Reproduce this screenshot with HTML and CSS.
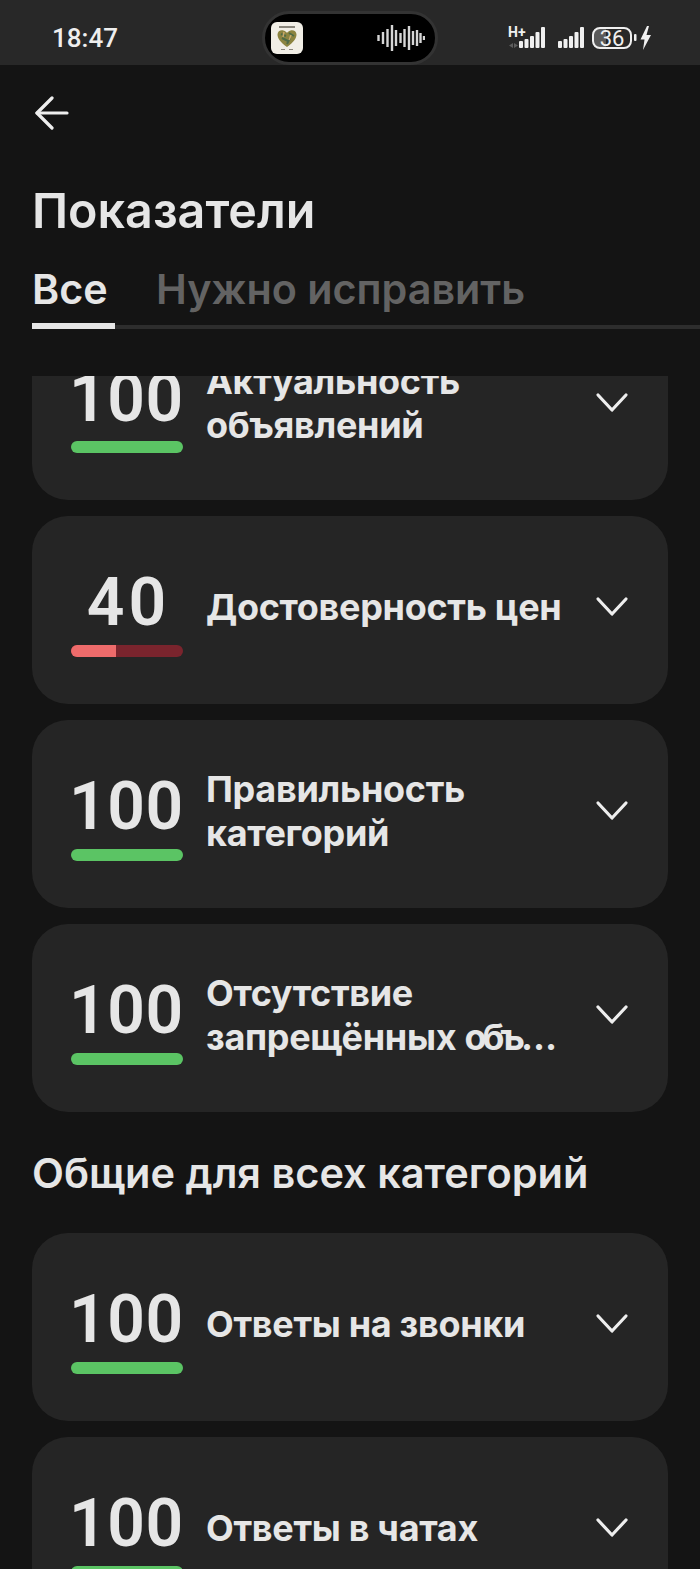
FILE: index.html
```html
<!DOCTYPE html>
<html lang="ru">
  <head>
    <meta charset="UTF-8" />
    <meta name="viewport" content="width=device-width, initial-scale=1.0" />
    <title>Показатели</title>
    <link rel="stylesheet" href="styles.css">
  </head>
  <body>
    <div class="status">
      <div class="time">18:47</div>
      <div class="pill">
        <svg class="app-icon" width="32" height="32" viewBox="0 0 32 32">
          <rect width="32" height="32" rx="6" fill="#f1eee6"/>
          <rect x="8" y="4" width="16" height="2" fill="#8a867c"/>
          <path d="M16 25 C9 20 6.500 16 6.500 12.500 C6.500 9 10 7.500 12.500 8.500 C14.500 9.200 15.500 10 16 11 C16.500 10 17.500 9.200 19.500 8.500 C22 7.500 25.500 9 25.500 12.500 C25.500 16 23 20 16 25 Z" fill="#8c8440"/>
          <path d="M10 12 L15 14 M18 11 L23 14 M11 16 L17 19 M19 16 L16 22" stroke="#4f6b46" stroke-width="2"/>
          <path d="M13 10 L12 15 M20 13 L18 18" stroke="#c9a86a" stroke-width="1.500"/>
          <rect x="10" y="27" width="4" height="1" fill="#8a867c"/>
          <rect x="18" y="27" width="4" height="1" fill="#8a867c"/>
        </svg>
        <svg class="wave" width="48" height="30" viewBox="0 0 48 30">
          <g stroke="#d6d6d6" stroke-width="2.400">
            <path d="M1.500 12 V18"/>
            <path d="M6 9 V21"/>
            <path d="M10.500 6 V24"/>
            <path d="M15 2 V28"/>
            <path d="M19 7 V23"/>
            <path d="M23.500 10 V20"/>
            <path d="M27.500 6 V24"/>
            <path d="M32 3 V27"/>
            <path d="M36 8 V22"/>
            <path d="M40 7 V23"/>
            <path d="M43.500 10 V20"/>
            <path d="M47 13 V17"/>
          </g>
        </svg>
      </div>
      <svg class="sys-icons" width="144" height="26" viewBox="0 0 144 26">
        <text x="0" y="12" class="net-type">H+</text>
        <path d="M5 23 L1 20.500 L5 18 Z M6 18 L10 20.500 L6 23 Z" fill="#5c5c5c"/>
        <g fill="#f0f0f0">
          <rect x="11" y="16" width="4" height="7" rx="1"/>
          <rect x="16.500" y="14" width="4" height="9" rx="1"/>
          <rect x="22" y="11" width="4" height="12" rx="1"/>
          <rect x="27.500" y="7" width="4" height="16" rx="1"/>
          <rect x="33" y="2" width="4" height="21" rx="1"/>
          <rect x="50" y="16" width="4" height="7" rx="1"/>
          <rect x="55.500" y="14" width="4" height="9" rx="1"/>
          <rect x="61" y="11" width="4" height="12" rx="1"/>
          <rect x="66.500" y="7" width="4" height="16" rx="1"/>
          <rect x="72" y="2" width="4" height="21" rx="1"/>
        </g>
        <path d="M88 4 H98 V22 H88 Q86 22 86 20 V6 Q86 4 88 4 Z" fill="#5a5a5a"/>
        <rect x="85" y="3" width="38" height="20" rx="7" fill="none" stroke="#f0f0f0" stroke-width="2"/>
        <text x="104" y="21" class="battery-level">36</text>
        <rect x="126" y="9" width="2.500" height="7" rx="1" fill="#f0f0f0"/>
        <path d="M139 1 L132.500 14.500 H136.500 L135 25 L143 10 H138.500 L141 1 Z" fill="#f0f0f0"/>
      </svg>
    </div>

    <div class="toolbar">
      <svg width="34" height="34" viewBox="0 0 34 34" fill="none" stroke="#eeeeee" stroke-width="3.200" stroke-linecap="round" stroke-linejoin="round">
        <path d="M2 17 H32"/>
        <path d="M17 2 L2 17 L17 32"/>
      </svg>
    </div>

    <h1 class="title">Показатели</h1>

    <div class="tabs">
      <div class="tab tab-active">Все</div>
      <div class="tab">Нужно исправить</div>
    </div>

    <div class="scroller">
      <div class="list">
        <div class="card">
          <div class="score">
            <div class="score-num">100</div>
            <div class="bar"><div class="bar-fill" style="width: 100%"></div></div>
          </div>
          <div class="label">Актуальность<br>объявлений</div>
          <svg class="chevron" width="34" height="22" viewBox="0 0 34 22"><path d="M3 3 L17 18 L31 3"/></svg>
        </div>
        <div class="card">
          <div class="score">
            <div class="score-num score-num-wide">40</div>
            <div class="bar bar-low"><div class="bar-fill" style="width: 40%"></div></div>
          </div>
          <div class="label">Достоверность цен</div>
          <svg class="chevron" width="34" height="22" viewBox="0 0 34 22"><path d="M3 3 L17 18 L31 3"/></svg>
        </div>
        <div class="card">
          <div class="score">
            <div class="score-num">100</div>
            <div class="bar"><div class="bar-fill" style="width: 100%"></div></div>
          </div>
          <div class="label">Правильность<br>категорий</div>
          <svg class="chevron" width="34" height="22" viewBox="0 0 34 22"><path d="M3 3 L17 18 L31 3"/></svg>
        </div>
        <div class="card">
          <div class="score">
            <div class="score-num">100</div>
            <div class="bar"><div class="bar-fill" style="width: 100%"></div></div>
          </div>
          <div class="label">Отсутствие<br>запрещённых <span class="label-cut">объ…</span></div>
          <svg class="chevron" width="34" height="22" viewBox="0 0 34 22"><path d="M3 3 L17 18 L31 3"/></svg>
        </div>

        <h2 class="section">Общие для всех категорий</h2>

        <div class="card">
          <div class="score">
            <div class="score-num">100</div>
            <div class="bar"><div class="bar-fill" style="width: 100%"></div></div>
          </div>
          <div class="label">Ответы на звонки</div>
          <svg class="chevron" width="34" height="22" viewBox="0 0 34 22"><path d="M3 3 L17 18 L31 3"/></svg>
        </div>
        <div class="card">
          <div class="score">
            <div class="score-num">100</div>
            <div class="bar"><div class="bar-fill" style="width: 100%"></div></div>
          </div>
          <div class="label">Ответы в чатах</div>
          <svg class="chevron" width="34" height="22" viewBox="0 0 34 22"><path d="M3 3 L17 18 L31 3"/></svg>
        </div>
      </div>
    </div>
  </body>
</html>
```

FILE: styles.css
```css
* {
  box-sizing: border-box;
}
html,
body {
  margin: 0;
  height: 1569px;
  overflow: hidden;
}
body {
  display: flex;
  flex-direction: column;
  background: #141414;
  color: #e6e6e6;
  font-family: Inter, "Noto Sans", sans-serif;
}

.status {
  display: grid;
  grid-template-columns: 1fr auto 1fr;
  align-items: center;
  height: 65px;
  flex: none;
  padding: 11px 48px 0;
  background: #282828;
}
.time {
  padding-left: 4px;
  font-family: Roboto, sans-serif;
  font-size: 26px;
  font-weight: 500;
  color: #eeeeee;
}
.pill {
  display: flex;
  align-items: center;
  justify-content: space-between;
  width: 176px;
  height: 54px;
  padding: 0 10px 0 6px;
  border: 3px solid #333333;
  border-radius: 27px;
  background: #000000;
}
.sys-icons {
  justify-self: end;
}
.net-type {
  font-family: Roboto, sans-serif;
  font-size: 14px;
  font-weight: 700;
  fill: #f0f0f0;
}
.battery-level {
  font-family: Roboto, sans-serif;
  font-size: 22px;
  text-anchor: middle;
  fill: #f0f0f0;
}

.toolbar {
  flex: none;
  height: 118px;
  padding: 31px 0 0 35px;
}
.title {
  flex: none;
  margin: 0;
  padding-left: 32px;
  font-size: 48.400px;
  line-height: 56px;
  font-weight: 600;
}
.tabs {
  flex: none;
  display: flex;
  gap: 41px;
  height: 70px;
  margin-top: 20px;
  margin-left: 32px;
  border-bottom: 4px solid #2d2d2d;
}
.tab {
  font-size: 41.300px;
  line-height: 60px;
  font-weight: 600;
  color: #636363;
}
.tab-active {
  height: 70px;
  width: 83px;
  border-bottom: 6px solid #e6e6e6;
  color: #e6e6e6;
}

.scroller {
  flex: 1;
  min-height: 0;
  margin-top: 47px;
  overflow: hidden;
}
.list {
  display: flex;
  flex-direction: column;
  gap: 16px;
  margin: -64px 32px 0;
}
.card {
  display: flex;
  align-items: center;
  height: 188px;
  flex: none;
  padding: 0 39px;
  border-radius: 36px;
  background: #252525;
}
.score {
  flex: none;
  width: 112px;
  margin-top: 3px;
  margin-right: 23px;
  text-align: center;
}
.score-num {
  margin: 0 0 6px -2px;
  font-family: Roboto, sans-serif;
  font-size: 66px;
  line-height: 72px;
  font-weight: 600;
  letter-spacing: 0.5px;
}
.score-num-wide {
  margin-left: 3px;
  letter-spacing: 4px;
}
.bar {
  height: 12px;
  border-radius: 6px;
  overflow: hidden;
  background: #5bc464;
}
.bar-fill {
  height: 100%;
  background: #5bc464;
}
.bar-low {
  background: #7a242d;
}
.bar-low .bar-fill {
  background: #ee6b6b;
}
.label {
  flex: 1;
  min-width: 0;
  margin-bottom: 7px;
  font-size: 36px;
  line-height: 44px;
  font-weight: 650;
  letter-spacing: -0.300px;
  white-space: nowrap;
}
.label-cut {
  letter-spacing: -4px;
}
.chevron {
  flex: none;
  margin-bottom: 6px;
  fill: none;
  stroke: #eeeeee;
  stroke-width: 3.200;
  stroke-linecap: round;
  stroke-linejoin: round;
}
.section {
  margin: 20px 0 19px;
  font-size: 41.500px;
  line-height: 50px;
  font-weight: 600;
}
```
